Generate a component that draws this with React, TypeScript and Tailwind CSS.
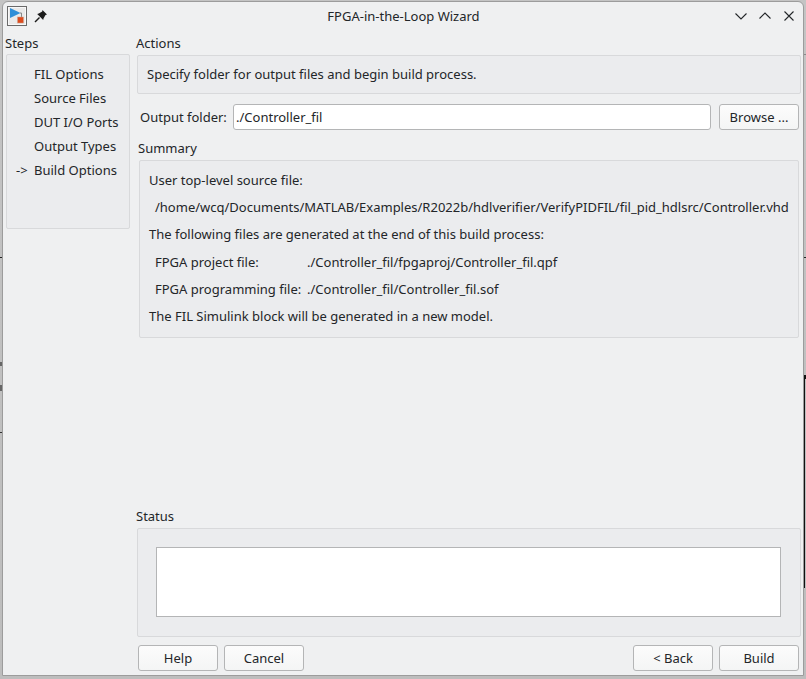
import React from 'react';

const font = { fontFamily: '"Noto Sans", sans-serif' };

const steps = ['FIL Options', 'Source Files', 'DUT I/O Ports', 'Output Types', 'Build Options'];

const WizardButton = ({ label, className = '' }: { label: string; className?: string }) => (
  <button className={`w-20 h-[26px] rounded-[3px] border border-[#b4b5b6] bg-gradient-to-b from-[#fcfcfc] to-[#f4f5f5] text-[13px] leading-none text-[#232629] ${className}`}>
    {label}
  </button>
);

const TitleIcon = () => (
  <svg width="20" height="20" viewBox="0 0 20 20">
    <rect x="0.5" y="0.5" width="19" height="19" fill="#e9e9e9" stroke="#6a6a6a" />
    <rect x="1.5" y="1.5" width="17" height="17" fill="none" stroke="#f8f8f8" />
    <path d="M3 2 L13.5 7 L3 12 Z" fill="#2f8fd8" />
    <path d="M13 7 H14.5 V11" fill="none" stroke="#888" strokeWidth="1" />
    <rect x="10.5" y="11" width="6" height="6" fill="#dd4b1e" stroke="#c9a58f" strokeWidth="0.5" />
  </svg>
);

const PinIcon = () => (
  <svg width="14" height="14" viewBox="0 0 14 14">
    <path d="M8.5 1 L13 5.5 L11.5 6 L9.5 9.5 L9.2 11 L3.2 5 L4.8 4.6 L8.2 2.5 Z" fill="#1c1c1c" />
    <path d="M5.5 8.5 L1 13" stroke="#1c1c1c" strokeWidth="1.5" />
  </svg>
);

const WindowButtons = () => (
  <div className="flex items-center gap-[10px] pr-[7px] -mt-[3px]">
    <svg width="14" height="14" viewBox="0 0 14 14" fill="none" stroke="#232629" strokeWidth="1.1">
      <path d="M1.5 4.5 L7 10 L12.5 4.5" />
    </svg>
    <svg width="14" height="14" viewBox="0 0 14 14" fill="none" stroke="#232629" strokeWidth="1.1">
      <path d="M1.5 9.5 L7 4 L12.5 9.5" />
    </svg>
    <svg width="14" height="14" viewBox="0 0 14 14" fill="none" stroke="#232629" strokeWidth="1.1">
      <path d="M2.5 2.5 L11.5 11.5 M11.5 2.5 L2.5 11.5" />
    </svg>
  </div>
);

export default function App() {
  return (
    <div
      style={font}
      className="relative w-[806px] h-[679px] overflow-hidden bg-gradient-to-b from-[#c4c4c4] to-[#bdbdbd] text-[13px] leading-[18px] text-[#232629] pl-[2px] pt-px"
    >
      {/* bits of the windows behind */}
      <div className="absolute left-0 top-[257px] w-[2px] h-px bg-[#222]" />
      <div className="absolute left-0 top-[362px] w-[2px] h-[4px] bg-[#666]" />
      <div className="absolute left-0 top-[385px] w-[2px] h-[6px] bg-[#666]" />
      <div className="absolute left-0 top-[432px] w-[2px] h-px bg-[#333]" />
      <div className="absolute right-0 top-[54px] w-[2px] h-px bg-[#8a8a8a]" />
      <div className="absolute right-0 top-[257px] w-[2px] h-px bg-[#222]" />
      <div className="absolute left-[804px] top-[375px] w-[2px] h-[4px] bg-[#111]" />
      <div className="absolute left-[804px] top-[375px] w-px h-[213px] bg-[#111]" />

      <div className="w-[802px] h-[675px] rounded-t-[6px] border border-[#9c9c9c] bg-[#eff0f1] flex flex-col">
        {/* title bar */}
        <div className="relative h-[30px] flex items-center justify-between shrink-0 pl-[4px]">
          <div className="flex items-center gap-[7px] -mt-[2px]">
            <TitleIcon />
            <PinIcon />
          </div>
          <div className="absolute left-0 right-0 top-[5px] text-center pl-px">FPGA-in-the-Loop Wizard</div>
          <WindowButtons />
        </div>

        <div className="flex flex-1 min-h-0">
          {/* steps */}
          <div className="w-[127px] shrink-0 pl-[2px] pt-[2px]">
            <div className="h-[18px]">Steps</div>
            <div className="mt-[2px] ml-px w-[124px] h-[175px] rounded-[2px] border border-[#d8d9db] bg-[#ebecee] pt-[7px]">
              {steps.map((s, i) => (
                <div key={s} className="flex h-6 items-center">
                  <span className="w-[27px] pl-[9px] shrink-0">{i === 4 ? '->' : ''}</span>
                  <span>{s}</span>
                </div>
              ))}
            </div>
          </div>

          {/* main */}
          <div className="flex-1 min-w-0 flex flex-col pl-[6px] pt-[2px]">
            <div className="h-[18px]">Actions</div>
            <div className="mt-[3px] ml-px w-[664px] h-[39px] rounded-[2px] border border-[#d8d9db] bg-[#ebecee] flex items-center pl-[9px] pb-[2px]">
              Specify folder for output files and begin build process.
            </div>

            <div className="mt-[10px] ml-[4px] flex items-center h-[26px]">
              <span className="w-[93px] shrink-0">Output folder:</span>
              <div className="w-[478px] h-[26px] rounded-[3px] border border-[#b4b5b6] bg-white flex items-center pl-[2px]">
                ./Controller_fil
              </div>
              <WizardButton label="Browse ..." className="ml-2" />
            </div>

            <div className="mt-[9px] ml-[2px] h-[18px]">Summary</div>
            <div className="mt-[3px] ml-[3px] w-[660px] h-[178px] rounded-[2px] border border-[#d8d9db] bg-[#ebecee] pl-[9px] pt-[10px] flex flex-col gap-[9px] whitespace-nowrap">
              <div>User top-level source file:</div>
              <div className="pl-[6px]">/home/wcq/Documents/MATLAB/Examples/R2022b/hdlverifier/VerifyPIDFIL/fil_pid_hdlsrc/Controller.vhd</div>
              <div>The following files are generated at the end of this build process:</div>
              <div className="flex pl-[6px] mt-px">
                <span className="w-[152px]">FPGA project file:</span>
                <span>./Controller_fil/fpgaproj/Controller_fil.qpf</span>
              </div>
              <div className="flex pl-[6px]">
                <span className="w-[152px]">FPGA programming file:</span>
                <span>./Controller_fil/Controller_fil.sof</span>
              </div>
              <div>The FIL Simulink block will be generated in a new model.</div>
            </div>

            <div className="mt-[169px] h-[18px]">Status</div>
            <div className="mt-[3px] ml-px w-[664px] h-[109px] rounded-[2px] border border-[#d8d9db] bg-[#ebecee] pl-[18px] pt-[18px]">
              <div className="w-[625px] h-[70px] border border-[#b4b5b6] bg-white" />
            </div>

            <div className="mt-[8px] ml-[2px] w-[661px] flex">
              <WizardButton label="Help" />
              <WizardButton label="Cancel" className="ml-[6px]" />
              <WizardButton label="< Back" className="ml-auto" />
              <WizardButton label="Build" className="ml-[6px]" />
            </div>
          </div>
        </div>
      </div>
    </div>
  );
}
